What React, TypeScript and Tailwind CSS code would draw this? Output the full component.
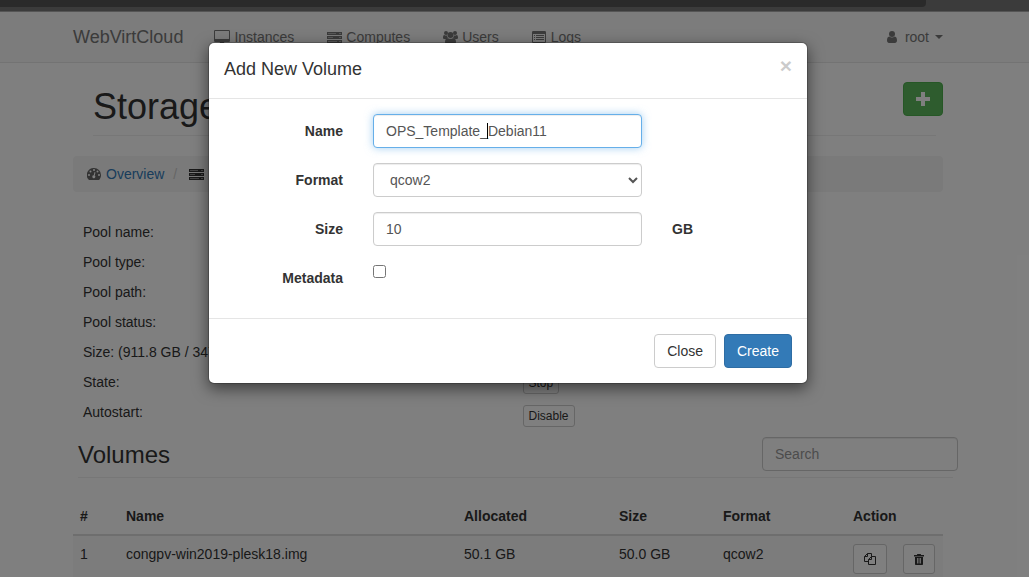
import { useEffect, useRef } from "react";
import type { ReactNode } from "react";

function DesktopIcon() {
  return (
    <svg viewBox="0 0 16 14" className="h-[14px] w-4" fill="currentColor" aria-hidden="true">
      <path
        fillRule="evenodd"
        d="M1.2 0h13.6A1.2 1.2 0 0 1 16 1.2v9.6a1.2 1.2 0 0 1-1.2 1.2H10c0 .6.5 1 .5 1.5s-.2.5-.5.5H6c-.3 0-.5-.2-.5-.5S6 12.6 6 12H1.2A1.2 1.2 0 0 1 0 10.8V1.2A1.2 1.2 0 0 1 1.2 0ZM1.3 1c-.2 0-.3.1-.3.3V8.700c0 .2.1.3.3.3h13.400c.2 0 .3-.1.3-.3V1.300c0-.2-.1-.3-.3-.3Z"
      />
    </svg>
  );
}

function ServerIcon() {
  return (
    <svg viewBox="0 0 15 11" className="h-[11px] w-[15px]" fill="currentColor" aria-hidden="true">
      <path d="M0 0h15v3H0ZM0 4h15v3H0ZM0 8h15v3H0Z" fillOpacity="0.55" />
      <path d="M0 0h15v1H0ZM0 2h15v1H0ZM0 4h15v1H0ZM0 6h15v1H0ZM0 8h15v1H0ZM0 10h15v1H0ZM9 1h3v1H9ZM14 1h1v1h-1ZM6 5h6v1H6ZM14 5h1v1h-1ZM10 9h2v1h-2ZM14 9h1v1h-1ZM0 1h1v1H0ZM0 5h1v1H0ZM0 9h1v1H0Z" />
    </svg>
  );
}

function UsersIcon() {
  return (
    <svg viewBox="0 0 15 13" className="h-[13px] w-[15px]" fill="currentColor" aria-hidden="true">
      <circle cx="3" cy="2" r="2" />
      <circle cx="12" cy="2" r="2" />
      <circle cx="7.5" cy="4" r="3" />
      <path d="M1.3 4c.6.5 1.200.6 1.800.6.400 0 .7 0 1-.1 0 1 .3 1.800.9 2.500-.9 0-1.600.4-2.200 1H1.500C.6 8 0 7.600 0 6.800 0 5.700.2 4 1.300 4ZM13.700 4c-.6.5-1.200.6-1.800.6-.4 0-.7 0-1-.1 0 1-.3 1.800-.9 2.500.9 0 1.600.4 2.200 1h1.300c.9 0 1.500-.4 1.500-1.200 0-1.100-.2-2.800-1.300-2.800ZM4.800 6.900c.8.600 1.700.9 2.700.9s1.900-.3 2.700-.9c2 0 2.800 2 2.800 4.200 0 1.200-.8 1.900-2 1.900H4c-1.200 0-2-.7-2-1.900 0-2.200.8-4.200 2.800-4.200Z" />
    </svg>
  );
}

function ListIcon() {
  return (
    <svg viewBox="0 0 14 12" className="h-3 w-[14px]" fill="currentColor" aria-hidden="true">
      <path
        fillRule="evenodd"
        d="M1.200 0h11.600A1.200 1.200 0 0 1 14 1.200v9.600a1.200 1.200 0 0 1-1.200 1.200H1.200A1.200 1.200 0 0 1 0 10.800V1.200A1.200 1.200 0 0 1 1.200 0ZM1 3v7.700c0 .2.100.3.300.3h11.400c.2 0 .3-.1.3-.3V3Z"
      />
      <path d="M2 4h1v1H2ZM4 4h8v1H4ZM2 6h1v1H2ZM4 6h8v1H4ZM2 8h1v1H2ZM4 8h8v1H4Z" />
    </svg>
  );
}

function UserIcon() {
  return (
    <svg viewBox="0 0 10 12" className="h-3 w-[10px]" fill="currentColor" aria-hidden="true">
      <circle cx="5" cy="3" r="3" />
      <path d="M2.400 5.500C3.100 6.200 4 6.600 5 6.600s1.900-.4 2.600-1.100C9.500 5.600 10 7.600 10 9.600c0 1.400-.9 2.400-2 2.400H2c-1.100 0-2-1-2-2.400 0-2 .5-4 2.400-4.100Z" />
    </svg>
  );
}

function DashboardIcon() {
  return (
    <svg viewBox="0 0 14 12" className="h-3 w-[14px] text-[#666]" aria-hidden="true">
      <path
        fill="currentColor"
        d="M7 0a7 7 0 0 1 7 7c0 1.600-.5 3.100-1.300 4.300-.3.500-.6.700-1 .7H2.300c-.4 0-.7-.2-1-.7A7 7 0 0 1 7 0Z"
      />
      <g fill="white">
        <circle cx="2" cy="7" r="1" />
        <circle cx="3.500" cy="3.500" r="1" />
        <circle cx="7" cy="2" r="1" />
        <circle cx="10.500" cy="3.500" r="1" />
        <circle cx="12" cy="7" r="1" />
        <path d="m7.600 4.100.9.300-.8 3.100A1.500 1.500 0 1 1 6.700 7.200Z" />
      </g>
    </svg>
  );
}

function CloneIcon() {
  return (
    <svg viewBox="0 0 12 12" className="size-3" fill="none" stroke="currentColor" aria-hidden="true">
      <path d="M4.500 8.500h-4v-5l3-3h4v3M3.500 .5v3h-3M7.500 3.500h4v8h-7v-5ZM7.500 3.500v3h-3" />
    </svg>
  );
}

function TrashIcon() {
  return (
    <svg viewBox="0 0 10 11" className="h-[11px] w-[10px]" fill="currentColor" aria-hidden="true">
      <path
        fillRule="evenodd"
        d="M0 1h3V.5C3 .2 3.200 0 3.500 0h3c.3 0 .5.200.5.500V1h3v1.500H0ZM1 3h8v7c0 .6-.4 1-1 1H2c-.6 0-1-.4-1-1ZM3 4v5.500h.8V4ZM4.600 4v5.500h.8V4ZM6.200 4v5.500H7V4Z"
      />
    </svg>
  );
}

function NavItem({ icon, label }: { icon: ReactNode; label: string }) {
  return (
    <a href="#" className="flex items-center gap-1 text-[#777]">
      <span className="flex w-4 justify-center">{icon}</span>
      {label}
    </a>
  );
}

const poolLabels = [
  "Pool name:",
  "Pool type:",
  "Pool path:",
  "Pool status:",
  "Size: (911.8 GB / 347",
  "State:",
  "Autostart:",
];

const poolActions = ["Stop", "Disable"];

function StoragePage() {
  return (
    <div>
      <div className="h-3 border-b border-[#aaa] bg-[#777]">
        <div className="h-[7px] w-[90%] rounded-br-sm bg-[#555]" />
      </div>
      <nav className="h-[51px] border-b border-[#e7e7e7] bg-[#f8f8f8]">
        <div className="mx-auto flex h-[50px] max-w-[885px] items-center px-[1px]">
          <a href="#" className="text-lg text-[#777]">
            WebVirtCloud
          </a>
          <div className="ml-[31px] flex flex-1 gap-8">
            <NavItem icon={<DesktopIcon />} label="Instances" />
            <NavItem icon={<ServerIcon />} label="Computes" />
            <NavItem icon={<UsersIcon />} label="Users" />
            <NavItem icon={<ListIcon />} label="Logs" />
          </div>
          <a href="#" className="mr-[13px] flex items-center gap-2 text-[#777]">
            <UserIcon />
            root
            <span className="-ml-[2px] border-x-4 border-t-4 border-x-transparent border-t-[#777]" />
          </a>
        </div>
      </nav>
      <main className="mx-auto max-w-[885px] px-[1px]">
        <header className="mx-5 mt-4 flex h-[57px] items-start justify-between border-b border-[#eee]">
          <h1 className="mt-2 text-4xl leading-10">Storage</h1>
          <button
            type="button"
            aria-label="Add volume"
            className="mt-[3px] -mr-[7px] flex h-[34px] w-10 items-center justify-center rounded-sm border border-[#4cae4c] bg-[#5cb85c] text-white"
          >
            <svg viewBox="0 0 14 14" className="size-[14px]" fill="currentColor" aria-hidden="true">
              <path d="M5 0h4v5h5v4H9v5H5V9H0V5h5Z" />
            </svg>
          </button>
        </header>
        <div className="mr-[13px] mt-5 flex h-9 items-center rounded-sm bg-[#f5f5f5] px-[14px]">
          <DashboardIcon />
          <a href="#" className="ml-[5px] text-[#337ab7]">
            Overview
          </a>
          <span className="mx-[9px] text-[#ccc]">/</span>
          <span className="ml-[3px]">
            <ServerIcon />
          </span>
        </div>
        <div className="mt-[25px] grid grid-cols-2 px-[10px]">
          <div>
            {poolLabels.map((label) => (
              <p key={label} className="leading-[30px]">
                {label}
              </p>
            ))}
          </div>
          <div className="flex flex-col items-start justify-end gap-[11px] pl-2">
            {poolActions.map((action) => (
              <button
                key={action}
                type="button"
                className="h-[22px] rounded-[3px] border border-[#ccc] bg-white px-[5px] text-xs"
              >
                {action}
              </button>
            ))}
          </div>
        </div>
        <header className="ml-[5px] mr-[3px] mt-[10px] flex h-[41px] justify-between border-b border-[#eee]">
          <h2 className="mt-[2px] text-2xl leading-8">Volumes</h2>
          <input
            type="search"
            aria-label="Search volumes"
            placeholder="Search"
            className="-mr-[5px] h-[34px] w-[196px] rounded-sm border border-[#ccc] bg-white px-3 shadow-[inset_0_1px_1px_rgba(0,0,0,0.075)] placeholder:text-[#999]"
          />
        </header>
        <div className="mr-[13px] mt-5">
          <table className="w-full table-fixed text-left">
            <thead>
              <tr className="h-[37px] border-b-2 border-[#ddd]">
                <th className="w-[45px] px-[7px]">#</th>
                <th className="w-[338px] px-2">Name</th>
                <th className="w-[155px] px-2">Allocated</th>
                <th className="w-[104px] px-2">Size</th>
                <th className="w-[130px] px-2">Format</th>
                <th className="px-2">Action</th>
              </tr>
            </thead>
            <tbody>
              <tr className="h-[48px] bg-[#f9f9f9] align-top">
                <td className="px-[7px] py-2">1</td>
                <td className="p-2">congpv-win2019-plesk18.img</td>
                <td className="p-2">50.1 GB</td>
                <td className="p-2">50.0 GB</td>
                <td className="p-2">qcow2</td>
                <td className="p-2">
                  <div className="flex gap-4">
                    <button type="button" aria-label="Clone" className="flex h-[30px] w-[34px] shrink-0 items-center justify-center rounded-[3px] border border-[#ccc] bg-white">
                      <CloneIcon />
                    </button>
                    <button type="button" aria-label="Delete" className="flex h-[30px] w-8 shrink-0 items-center justify-center rounded-[3px] border border-[#ccc] bg-white">
                      <TrashIcon />
                    </button>
                  </div>
                </td>
              </tr>
            </tbody>
          </table>
        </div>
      </main>
    </div>
  );
}

const control =
  "h-[34px] w-full rounded-sm border border-[#ccc] bg-white px-3 text-[#555] outline-none shadow-[inset_0_1px_1px_rgba(0,0,0,0.075)] focus:border-[#66afe9] focus:shadow-[inset_0_1px_1px_rgba(0,0,0,0.075),0_0_8px_rgba(102,175,233,0.6)]";

function VolumeDialog() {
  const nameRef = useRef<HTMLInputElement>(null);

  useEffect(() => {
    nameRef.current?.focus({ preventScroll: true });
    nameRef.current?.setSelectionRange(13, 13);
  }, []);

  return (
    <form
      role="dialog"
      aria-modal="true"
      aria-labelledby="dialog-title"
      className="w-full max-w-[600px] rounded-md border border-black/20 bg-white bg-clip-padding shadow-[0_5px_15px_rgba(0,0,0,0.5)]"
    >
      <div className="flex items-start justify-between border-b border-[#e5e5e5] px-[15px] pb-4 pt-[13px]">
        <h4 id="dialog-title" className="text-lg leading-[26px]">
          Add New Volume
        </h4>
        <button type="button" aria-label="Close dialog" className="text-[21px] font-bold leading-5 text-black opacity-20">
          ×
        </button>
      </div>
      <div className="grid grid-cols-[134px_269px_1fr] items-center gap-x-[30px] gap-y-[15px] pb-[23px] pt-[15px]">
        <label htmlFor="name" className="text-right font-bold">
          Name
        </label>
        <div className="relative">
          <input
            ref={nameRef}
            id="name"
            type="text"
            defaultValue="OPS_Template_Debian11"
            className={`${control} caret-transparent`}
          />
          <span className="pointer-events-none absolute left-[114px] top-[9px] h-4 w-px bg-black" />
        </div>
        <span />
        <label htmlFor="format" className="text-right font-bold">
          Format
        </label>
        <select id="format" defaultValue="qcow2" className={control}>
          <option>qcow2</option>
          <option>raw</option>
        </select>
        <span />
        <label htmlFor="size" className="text-right font-bold">
          Size
        </label>
        <input id="size" type="text" defaultValue="10" className={control} />
        <label htmlFor="size" className="font-bold">
          GB
        </label>
        <label htmlFor="metadata" className="text-right font-bold">
          Metadata
        </label>
        <div className="h-[34px] pt-1">
          <input id="metadata" type="checkbox" className="block size-[13px]" />
        </div>
      </div>
      <div className="flex justify-end gap-2 border-t border-[#e5e5e5] p-[15px]">
        <button type="button" className="h-[34px] rounded-sm border border-[#ccc] bg-white px-3">
          Close
        </button>
        <button type="button" className="h-[34px] rounded-sm border border-[#2e6da4] bg-[#337ab7] px-3 text-white">
          Create
        </button>
      </div>
    </form>
  );
}

export default function App() {
  return (
    <div className="relative h-screen overflow-hidden bg-white font-['Liberation_Sans',Arial,sans-serif] text-sm text-[#333]">
      <StoragePage />
      <div className="absolute inset-0 flex items-start justify-center bg-black/50 pl-4 pr-[29px] pt-[42px]">
        <VolumeDialog />
      </div>
    </div>
  );
}
